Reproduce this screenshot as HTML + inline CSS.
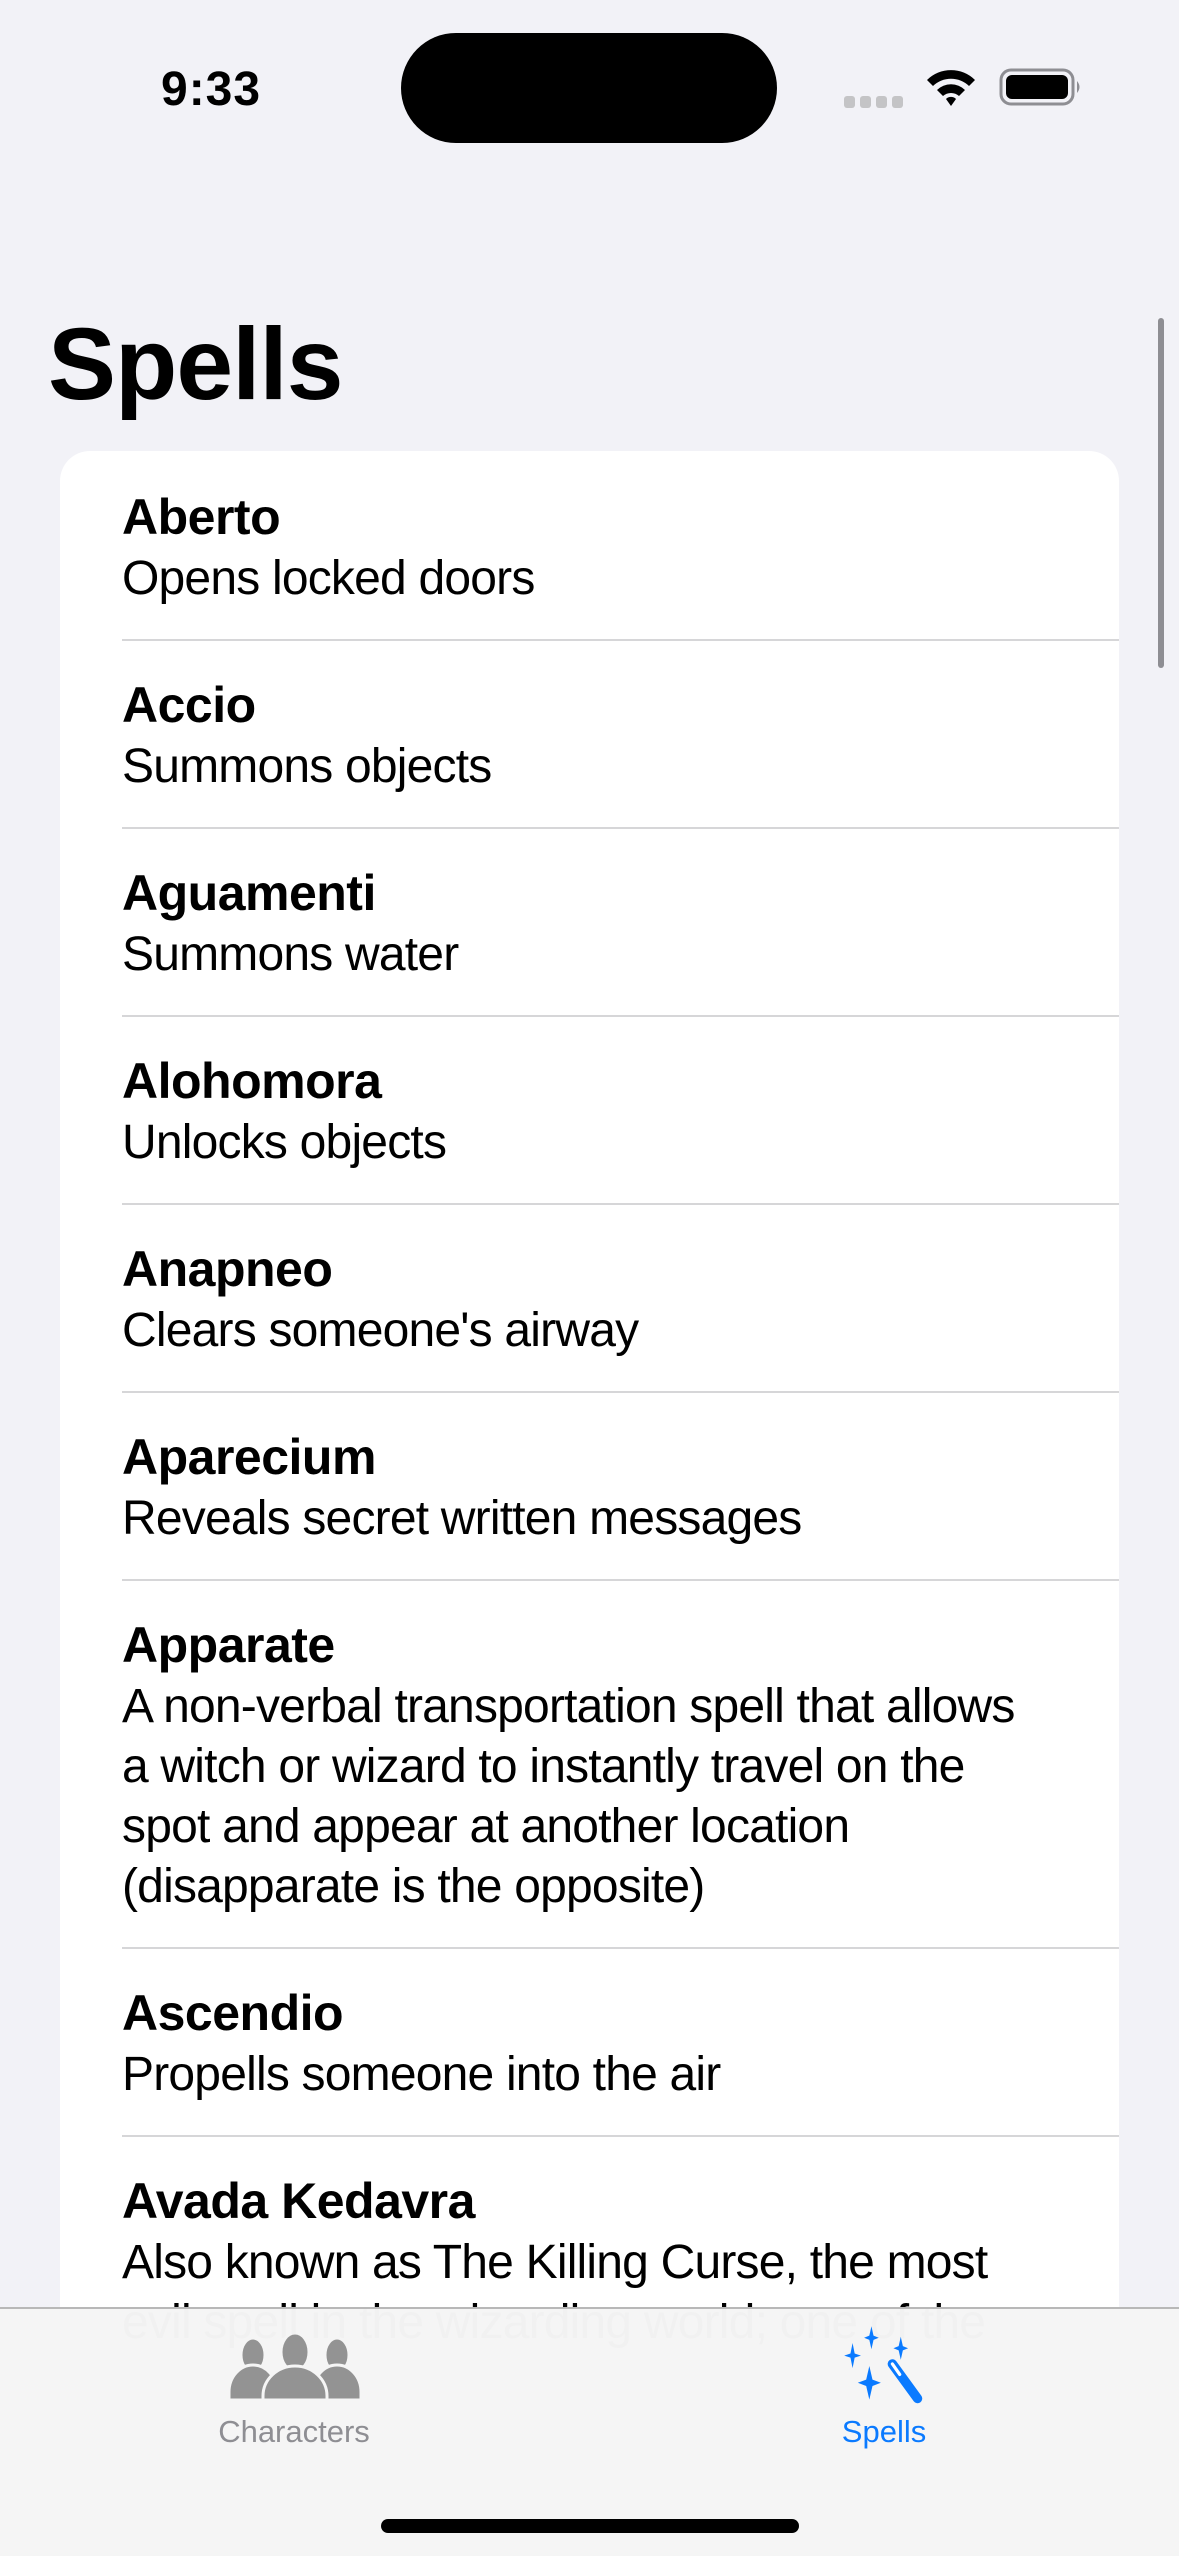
<!DOCTYPE html>
<html><head><meta charset="utf-8"><style>
*{margin:0;padding:0;box-sizing:border-box}
html{width:1179px;height:2556px;overflow:hidden}
body{width:1179px;height:2556px;background:#f2f2f7;font-family:"Liberation Sans",Helvetica,Arial,sans-serif;position:relative;overflow:hidden;color:#000}
.abs{position:absolute}
.time{left:161px;top:62px;font-size:48px;font-weight:700;letter-spacing:1px}
.island{left:401px;top:33px;width:376px;height:110px;border-radius:55px;background:#000}
h1{position:absolute;left:48px;top:306px;font-size:102px;font-weight:700;letter-spacing:-1px}
.card{position:absolute;left:60px;top:451px;width:1059px;height:2105px;background:#fff;border-radius:30px 30px 0 0;overflow:hidden}
.row{position:relative;padding:36px 0 32px 62px}
.row+.row:before{content:"";position:absolute;left:62px;right:0;top:0;height:2px;background:#d6d6d8}
.t{font-size:50px;font-weight:700;line-height:60px;letter-spacing:-0.5px}
.d{font-size:48px;line-height:60px;letter-spacing:-0.8px;white-space:nowrap;position:relative;top:2px}
.sb{left:1158px;top:318px;width:6px;height:350px;border-radius:3px;background:#8e8e93}
.tab{left:0;top:2307px;width:1179px;height:249px;background:rgba(245,245,245,0.985);border-top:2px solid #b8b8b8}
.lbl{font-size:31px;position:absolute;top:2414px;width:300px;text-align:center}
.home{left:381px;top:2519px;width:418px;height:14px;border-radius:7px;background:#000}
</style></head><body>
<div class="abs time">9:33</div>
<div class="abs island"></div>
<svg class="abs" style="left:844px;top:96px" width="62" height="12"><g fill="#c4c4c6"><rect x="0" y="0" width="11" height="12" rx="3"/><rect x="16" y="0" width="11" height="12" rx="3"/><rect x="32" y="0" width="11" height="12" rx="3"/><rect x="48" y="0" width="11" height="12" rx="3"/></g></svg>
<svg class="abs" style="left:924px;top:66px" width="54" height="42" viewBox="0 0 54 42"><path d="M3 14 A34 34 0 0 1 51 14 L45 20 A26 26 0 0 0 9 20 Z" fill="#000"/><path d="M13 24 A20 20 0 0 1 41 24 L35 30 A12 12 0 0 0 19 30 Z" fill="#000"/><path d="M22 33 A7 7 0 0 1 32 33 L27 40 Z" fill="#000"/></svg>
<svg class="abs" style="left:999px;top:68px" width="84" height="38"><rect x="2" y="2" width="72" height="34" rx="10" fill="none" stroke="#8e8e93" stroke-width="3"/><rect x="7" y="7" width="62" height="24" rx="6" fill="#000"/><path d="M78 13 q5 6 0 12z" fill="#8e8e93"/></svg>
<h1>Spells</h1>
<div class="abs sb"></div>
<div class="card">
<div class="row"><div class="t">Aberto</div><div class="d">Opens locked doors</div></div>
<div class="row"><div class="t">Accio</div><div class="d">Summons objects</div></div>
<div class="row"><div class="t">Aguamenti</div><div class="d">Summons water</div></div>
<div class="row"><div class="t">Alohomora</div><div class="d">Unlocks objects</div></div>
<div class="row"><div class="t">Anapneo</div><div class="d">Clears someone's airway</div></div>
<div class="row"><div class="t">Aparecium</div><div class="d">Reveals secret written messages</div></div>
<div class="row"><div class="t">Apparate</div><div class="d">A non-verbal transportation spell that allows<br>a witch or wizard to instantly travel on the<br>spot and appear at another location<br>(disapparate is the opposite)</div></div>
<div class="row"><div class="t">Ascendio</div><div class="d">Propells someone into the air</div></div>
<div class="row"><div class="t">Avada Kedavra</div><div class="d">Also known as The Killing Curse, the most<br>evil spell in the wizarding world; one of the</div></div>
</div>
<div class="abs tab"></div>
<svg class="abs" style="left:229px;top:2334px" width="132" height="66" viewBox="0 0 132 66"><g fill="#939393" stroke="#f5f5f5" stroke-width="3"><ellipse cx="24" cy="21" rx="12" ry="17"/><ellipse cx="108" cy="21" rx="12" ry="17"/><path d="M0 66 V58 A24 27 0 0 1 48 58 V66 Z"/><path d="M84 66 V58 A24 27 0 0 1 132 58 V66 Z"/><ellipse cx="66" cy="18" rx="14" ry="19"/><path d="M34 66 V62 A32 30 0 0 1 98 62 V66 Z"/></g></svg>
<div class="lbl" style="left:144px;color:#8e8e93">Characters</div>
<svg class="abs" style="left:840px;top:2326px" width="88" height="78" viewBox="0 0 84 74"><g fill="#0a7aff"><path d="M30 0 L32 9 L37 11 L32 13 L30 22 L28 13 L23 11 L28 9Z"/><path d="M58 10 L60 19 L65 21 L60 23 L58 32 L56 23 L51 21 L56 19Z"/><path d="M12 16 L14 26 L20 28 L14 30 L12 40 L10 30 L4 28 L10 26Z"/><path d="M28 38 L31 51 L39 54 L31 57 L28 70 L25 57 L17 54 L25 51Z"/></g><path d="M50 36 L74 69" stroke="#0a7aff" stroke-width="9" stroke-linecap="round"/><path d="M50 36 L57 46" stroke="#fff" stroke-width="3" stroke-linecap="round"/></svg>
<div class="lbl" style="left:734px;color:#0a7aff">Spells</div>
<div class="abs home"></div>
</body></html>
